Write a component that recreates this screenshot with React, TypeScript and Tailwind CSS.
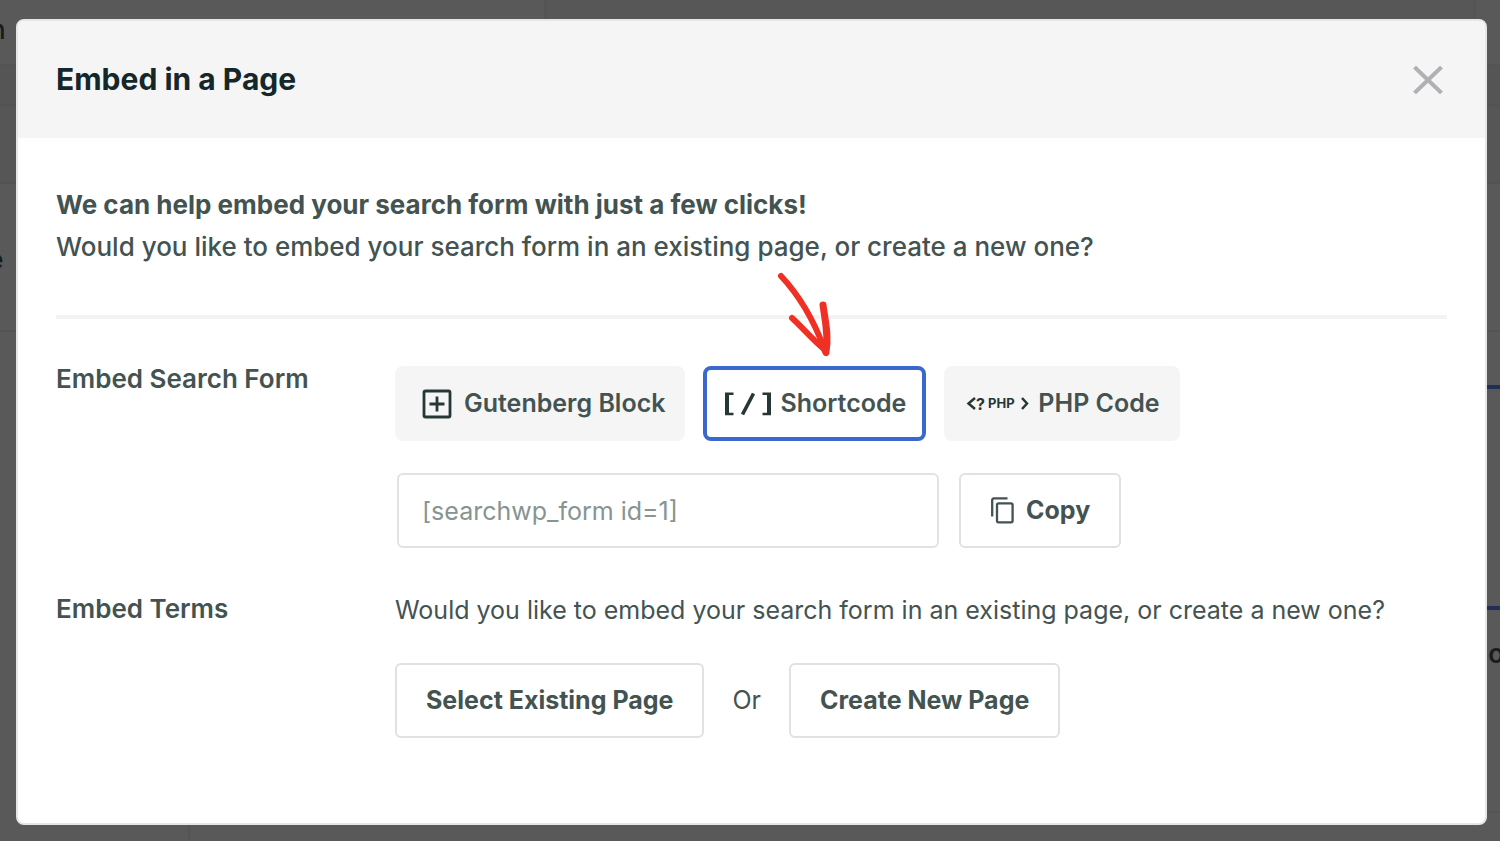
import { useState } from 'react';
import type { ReactNode } from 'react';

type EmbedType = 'block' | 'shortcode' | 'php';

const embedOptions: { id: EmbedType; label: string; className: string }[] = [
  { id: 'block', label: 'Gutenberg Block', className: 'gap-3 pl-[23px] pr-4' },
  { id: 'shortcode', label: 'Shortcode', className: 'gap-2 pl-[17px] pr-4' },
  { id: 'php', label: 'PHP Code', className: 'gap-2 pl-[18px] pr-4' }
];

const icons: Record<EmbedType, ReactNode> = {
  block: (
    <svg width="30" height="30" viewBox="0 0 30 30" fill="none" stroke="#263736" aria-hidden="true">
      <rect x="2" y="2" width="26" height="26" rx="1.5" strokeWidth="2.8" />
      <path d="M15 7.5v15M7.5 15h15" strokeWidth="2.8" />
    </svg>
  ),
  shortcode: (
    <svg width="48" height="26" viewBox="0 0 48 26" fill="none" stroke="#263736" aria-hidden="true">
      <path d="M3 2v22M45 2v22" strokeWidth="4" />
      <path d="M1 2.8h8.5M1 23h8.5M38.5 2.8H47M38.5 23H47" strokeWidth="2.4" />
      <path d="M29.5 2.5L18.5 23.5" strokeWidth="3.6" />
    </svg>
  ),
  php: (
    <svg width="64" height="20" viewBox="0 0 64 20" fill="none" aria-hidden="true">
      <path d="M9 4L2.5 9.5 9 15M56 4l5 5.5-5 5.5" stroke="#263736" strokeWidth="2.5" />
      <text x="10" y="15.5" fontFamily="Inter, sans-serif" fontSize="16" fontWeight="700" fill="#263736">?</text>
      <text x="22" y="14" fontFamily="Inter, sans-serif" fontSize="13" fontWeight="700" fill="#263736">PHP</text>
    </svg>
  )
};

function CopyIcon() {
  return (
    <svg width="24" height="28" viewBox="0 0 24 28" fill="none" stroke="#435351" strokeWidth="2.3" aria-hidden="true">
      <path d="M2.2 19.5V3A1.6 1.6 0 0 1 3.8 1.4H17.5" />
      <rect x="7" y="6.4" width="15.6" height="19" rx="1.6" />
    </svg>
  );
}

function Pointer() {
  return (
    <svg
      className="absolute -top-24 left-[70px] pointer-events-none"
      width="64"
      height="92"
      viewBox="0 0 64 92"
      fill="none"
      stroke="#ee3124"
      strokeLinecap="round"
      strokeLinejoin="round"
      aria-hidden="true"
    >
      <path d="M8 6C23 22 38 43 51 78" strokeWidth="6" />
      <path d="M19 48C29 57 40 70 51 79" strokeWidth="6" />
      <path d="M50 35C52 50 56 66 53 82" strokeWidth="7" />
      <path d="M47 72l6 11" strokeWidth="6" />
    </svg>
  );
}

function OutlineButton({ children, className = '' }: { children: ReactNode; className?: string }) {
  return (
    <button
      type="button"
      className={`flex h-[75px] items-center justify-center rounded-md border-2 border-[#dfe2e2] bg-white px-[29px] text-[25px] font-bold text-[#435351] ${className}`}
    >
      {children}
    </button>
  );
}

function PageBehind() {
  return (
    <main className="flex min-h-screen flex-col overflow-hidden bg-white text-[26px] font-medium text-[#435351]" aria-hidden="true">
      <div className="flex h-[66px] border-b-2 border-[#f0f0f0]">
        <div className="w-[546px] border-r-2 border-[#f0f0f0] pt-[10px]">
          <span className="-ml-[10px]">n</span>
        </div>
        <div className="mr-6 grow border-r-2 border-[#f0f0f0] bg-[#fafafa]" />
      </div>
      <div className="h-10 border-b-2 border-[#eeeeee] bg-[#f3f3f3]" />
      <div className="h-[78px] border-b-2 border-[#eeeeee] bg-[#f6f6f6]" />
      <div className="h-[148px] border-b-2 border-[#f0f0f0] pt-14">
        <span className="-ml-3 font-semibold">e</span>
      </div>
      <div className="flex grow">
        <div className="w-[190px] border-r-2 border-[#f0f0f0]" />
        <div className="flex grow flex-col items-end">
          <div className="mt-[53px] h-[225px] w-1/3 border-y-4 border-[#5b86f5]" />
          <span className="-mr-1 mt-6 font-semibold">o</span>
          <div className="mb-7 w-1/3 grow border-b-2 border-[#f0f0f0]" />
        </div>
      </div>
    </main>
  );
}

export default function App() {
  const [active, setActive] = useState<EmbedType>('shortcode');

  return (
    <div className="relative min-h-screen font-[Inter,sans-serif]">
      <PageBehind />

      <div className="absolute inset-0 flex bg-black/65 pt-[19px] pr-[13px] pb-4 pl-4">
        <section
          role="dialog"
          aria-labelledby="dialog-title"
          className="grow rounded-lg border-2 border-[#e5e7e7] bg-white text-[#435351]"
        >
          {/* Header */}
          <header className="flex h-[117px] items-center justify-between rounded-t-md bg-[#f5f5f5] px-[38px]">
            <h1 id="dialog-title" className="text-[30px] font-bold text-[#14272a]">Embed in a Page</h1>
            <button type="button" aria-label="Close" className="p-1">
              <svg width="30" height="28" viewBox="0 0 30 28" stroke="#afb1b4" strokeWidth="4" aria-hidden="true">
                <path d="M1.5 1l27 26M28.5 1l-27 26" />
              </svg>
            </button>
          </header>

          <div className="px-[38px] pt-[46px]">
            {/* Intro */}
            <div className="border-b-4 border-[#f2f4f4] pb-[47px] text-[26px] leading-[42px]">
              <p className="font-bold">We can help embed your search form with just a few clicks!</p>
              <p className="font-medium">Would you like to embed your search form in an existing page, or create a new one?</p>
            </div>

            {/* Embed Search Form */}
            <div className="mt-[47px] flex">
              <label htmlFor="shortcode" className="w-[339px] shrink-0 text-[26px] leading-[26px] font-semibold">
                Embed Search Form
              </label>
              <div className="grow">
                <div className="flex gap-[18px]">
                  {embedOptions.map((option) => (
                    <div key={option.id} className="relative">
                      <button
                        type="button"
                        aria-pressed={active === option.id}
                        onClick={() => setActive(option.id)}
                        className={`flex h-[75px] items-center rounded-lg border-4 text-[25px] font-semibold ${option.className} ${
                          active === option.id ? 'border-[#3b68cd] bg-white' : 'border-[#f5f5f5] bg-[#f5f5f5]'
                        }`}
                      >
                        {icons[option.id]}
                        {option.label}
                      </button>
                      {option.id === 'shortcode' && <Pointer />}
                    </div>
                  ))}
                </div>
                <div className="mt-8 flex gap-5 pl-[2px]">
                  <input
                    id="shortcode"
                    readOnly
                    value="[searchwp_form id=1]"
                    className="h-[75px] w-[542px] rounded-md border-2 border-[#dfe3e2] px-[23px] text-[25px] text-[#879491]"
                  />
                  <OutlineButton className="gap-3">
                    <CopyIcon />
                    Copy
                  </OutlineButton>
                </div>
              </div>
            </div>

            {/* Embed Terms */}
            <div className="mt-11 flex">
              <h2 className="w-[339px] shrink-0 text-[26px] leading-[34px] font-semibold">Embed Terms</h2>
              <div className="grow">
                <p className="text-[25px] leading-9">
                  Would you like to embed your search form in an existing page, or create a new one?
                </p>
                <div className="mt-[35px] flex items-center gap-7">
                  <OutlineButton>Select Existing Page</OutlineButton>
                  <span className="text-[25px]">Or</span>
                  <OutlineButton>Create New Page</OutlineButton>
                </div>
              </div>
            </div>
          </div>
        </section>
      </div>
    </div>
  );
}
